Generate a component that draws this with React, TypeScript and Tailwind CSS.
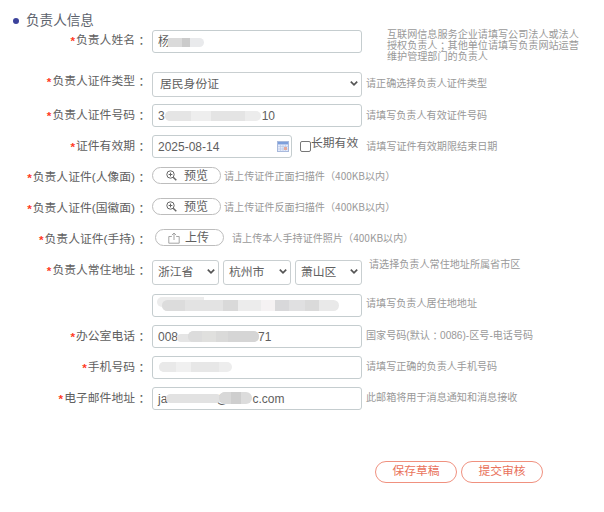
import React from 'react';

interface RowProps {
  label?: string;
  className: string;
  labelClass?: string;
  hint: React.ReactNode;
  hintClass: string;
  children: React.ReactNode;
}

const Row: React.FC<RowProps> = ({ label, className, labelClass = '', hint, hintClass, children }) => (
  <div className={`flex items-start ${className}`}>
    <div className={`w-[148px] shrink-0 flex justify-end text-[11.8px] leading-4 whitespace-nowrap ${labelClass}`}>
      {label && (
        <>
          <span className="text-[#ff3b1f] font-bold mr-px pt-px">*</span>
          <label>{label}</label>
          <span className="font-['Noto_Sans_CJK_TC',sans-serif] w-[13px] text-center">：</span>
        </>
      )}
    </div>
    <div className="ml-1 flex shrink-0">{children}</div>
    <div className={`text-[10.1px] leading-3 text-[#999] whitespace-nowrap ${hintClass}`}>{hint}</div>
  </div>
);

const Field: React.FC<{ children: React.ReactNode }> = ({ children }) => (
  <div className="relative w-[210px] h-[23px] border border-[#c5cdcf] rounded-[3px] bg-white px-[5px] flex items-center text-[12px] overflow-hidden">
    {children}
  </div>
);

interface SelectProps {
  value: string;
  className: string;
  padding: string;
}

const Select: React.FC<SelectProps> = ({ value, className, padding }) => (
  <div className={`relative h-[25px] ${className}`}>
    <select
      className={`appearance-none w-full h-full border border-[#c9cfd1] rounded-[3px] bg-white text-[11.8px] outline-none ${padding}`}
      defaultValue={value}
    >
      <option>{value}</option>
    </select>
    <svg className="absolute right-[4px] top-[9px]" width="8" height="7" viewBox="0 0 8 7" fill="none" stroke="#555" strokeWidth="1.7">
      <path d="M0.8 1.6 4 4.8 7.2 1.6" />
    </svg>
  </div>
);

const PreviewIcon = () => (
  <svg width="11" height="11" viewBox="0 0 11 11" fill="none" stroke="#666" strokeWidth="1">
    <circle cx="4.5" cy="4.5" r="3.7" />
    <path d="M2.6 4.5h3.8M4.5 2.6v3.8" />
    <path d="M7.2 7.2 10.3 10.3" strokeWidth="1.5" />
  </svg>
);

const UploadIcon = () => (
  <svg width="12" height="12" viewBox="0 0 12 12" fill="none" stroke="#9a9a9a" strokeWidth="0.9">
    <path d="M3.8 4.5H0.8v6.7h10.4V4.5H8.2M6 8V1M3.9 3.1 6 1l2.1 2.1" />
  </svg>
);

const PillButton: React.FC<{ icon: React.ReactNode; text: string; className: string }> = ({ icon, text, className }) => (
  <button className={`w-[69px] h-[17px] border border-[#bdbdbd] rounded-full flex items-center text-[12px] leading-none text-[#606060] ${className}`}>
    {icon}
    <span>{text}</span>
  </button>
);

const CalendarIcon = () => (
  <svg width="12" height="11" viewBox="0 0 12 11">
    <rect x="0.5" y="0.5" width="11" height="10" fill="#e3eafa" stroke="#a8b9dc" />
    <rect x="1" y="1" width="10" height="2.4" fill="#7d9fdb" />
    <path d="M1 5.5h10M1 8h10M3.5 3.5v7M6 3.5v7M8.5 3.5v7" stroke="#b6c5e4" strokeWidth="0.6" />
    <rect x="7" y="6" width="3" height="3" fill="#e6a99b" />
  </svg>
);

const Hint = ({ text }: { text: string }) => (
  <div className="flex font-['Noto_Sans_CJK_TC',sans-serif]">
    <span className="font-['Noto_Sans_CJK_SC',sans-serif]">{text}</span>
    <span>（</span>
    <span>400KB以内</span>
    <span>）</span>
  </div>
);

export default function App() {
  return (
    <div className="w-[604px] h-[512px] bg-white overflow-hidden text-[#606060] font-['Liberation_Sans','Noto_Sans_CJK_SC',sans-serif]">
      <h2 className="flex items-center h-[18px] mt-[12px] ml-[13px] text-[13.6px] text-[#5c626c]">
        <span className="size-[6px] rounded-full bg-[#3c429b] mr-[7px]" />
        负责人信息
      </h2>

      <Row
        label="负责人姓名"
        className="h-[23px]"
        labelClass="mt-[2px]"
        hintClass="ml-[25px] -mt-px !leading-[11px]"
        hint={
          <>
            <div>互联网信息服务企业请填写公司法人或法人</div>
            <div className="flex h-[11px]">
              授权负责人
              <span className="font-['Noto_Sans_CJK_TC',sans-serif]">；</span>
              其他单位请填写负责网站运营
            </div>
            <div>维护管理部门的负责人</div>
          </>
        }
      >
        <Field>
          <span>杨</span>
          <span className="absolute left-[15px] top-[7px] h-[9px] w-[36px] rounded-r-full bg-[#e9eaec] flex overflow-hidden">
            <i className="w-[14px] bg-[#dadada]" />
            <i className="w-[8px] bg-[#cbcbcb]" />
          </span>
        </Field>
      </Row>

      <Row label="负责人证件类型" className="h-[25px] mt-[18px]" labelClass="mt-[2px]" hint="请正确选择负责人证件类型" hintClass="ml-[4px] mt-[7px]">
        <Select value="居民身份证" className="w-[210px]" padding="pl-[7px]" />
      </Row>

      <Row label="负责人证件号码" className="h-[23px] mt-[8px]" labelClass="mt-[3px]" hint="请填写负责人有效证件号码" hintClass="ml-[4px] mt-[6px]">
        <Field>
          <span>3</span>
          <span className="absolute left-[12px] top-[6px] h-[10px] w-[96px] rounded-full bg-[#ececec] flex overflow-hidden">
            <i className="w-[26px] bg-[#e5e5e5]" />
            <i className="w-[20px] bg-[#eeeeee]" />
            <i className="w-[34px] bg-[#e4e4e4]" />
          </span>
          <span className="ml-[97px]">10</span>
        </Field>
      </Row>

      <Row label="证件有效期" className="h-[23px] mt-[8px]" labelClass="mt-[3px]" hint="请填写证件有效期限结束日期" hintClass="ml-[8px] mt-[6px]">
        <div className="w-[140px] h-[23px] border border-[#c5cdcf] rounded-[3px] flex items-center justify-between pl-[5px] pr-[2px]">
          <input className="w-[100px] text-[12px] outline-none" defaultValue="2025-08-14" />
          <CalendarIcon />
        </div>
        <label className="flex ml-[8px] text-[11.8px] leading-4 h-4">
          <input type="checkbox" className="appearance-none size-[11px] border border-[#777] rounded-[2px] mt-[6px]" />
          长期有效
        </label>
      </Row>

      <Row label="负责人证件(人像面)" className="h-[17px] mt-[9px]" labelClass="mt-[2px]" hint={<Hint text="请上传证件正面扫描件" />} hintClass="ml-[3px] mt-[3px]">
        <PillButton icon={<PreviewIcon />} text="预览" className="pl-[13px] gap-[7px]" />
      </Row>

      <Row label="负责人证件(国徽面)" className="h-[17px] mt-[14px]" labelClass="mt-[2px]" hint={<Hint text="请上传证件反面扫描件" />} hintClass="ml-[3px] mt-[3px]">
        <PillButton icon={<PreviewIcon />} text="预览" className="pl-[13px] gap-[7px]" />
      </Row>

      <Row label="负责人证件(手持)" className="h-[17px] mt-[14px]" labelClass="mt-[2px]" hint={<Hint text="请上传本人手持证件照片" />} hintClass="ml-[8px] mt-[3px]">
        <PillButton icon={<UploadIcon />} text="上传" className="ml-[3px] pl-[12px] gap-[5px]" />
      </Row>

      <Row label="负责人常住地址" className="h-[25px] mt-[14px]" labelClass="mt-[2px]" hint="请选择负责人常住地址所属省市区" hintClass="ml-[7px] -mt-px">
        <div className="flex gap-[4px] -mt-px">
          <Select value="浙江省" className="w-[67px]" padding="pl-[5px]" />
          <Select value="杭州市" className="w-[68px]" padding="pl-[5px]" />
          <Select value="萧山区" className="w-[67px]" padding="pl-[5px]" />
        </div>
      </Row>

      <Row className="h-[23px] mt-[9px]" hint="请填写负责人居住地地址" hintClass="ml-[4px] mt-[4px]">
        <Field>
          <span className="absolute left-[4px] top-[2px] h-[10px] w-[47px] rounded-l-full bg-[#ececec]" />
          <span className="absolute left-[9px] top-[5px] h-[11px] w-[177px] rounded-full bg-[#e9e9e9] flex overflow-hidden">
            <i className="w-[23px] bg-[#dcdcdc]" />
            <i className="w-[38px] bg-[#e3e3e3]" />
            <i className="w-[15px] bg-[#d9d9d9]" />
            <i className="w-[23px] bg-[#ececec]" />
            <i className="w-[14px] bg-[#f5f2f3]" />
            <i className="w-[14px] bg-[#d8d8da]" />
            <i className="w-[16px] bg-[#e0e0e1]" />
            <i className="w-[14px] bg-[#dadada]" />
          </span>
        </Field>
      </Row>

      <Row
        label="办公室电话"
        className="h-[23px] mt-[8px]"
        labelClass="mt-[3px]"
        hint={
          <div className="flex">
            国家号码(默认
            <span className="font-['Noto_Sans_CJK_TC',sans-serif]">：</span>
            0086)-区号-电话号码
          </div>
        }
        hintClass="ml-[4px] mt-[5px]"
      >
        <Field>
          <span>008</span>
          <span className="absolute left-[24px] top-[8px] h-[8px] w-[20px] rounded-full bg-[#e5e5e5]" />
          <span className="absolute left-[35px] top-[5px] h-[11px] w-[71px] rounded-full bg-[#dedede] flex overflow-hidden">
            <i className="w-[14px] bg-[#dcdcdc]" />
            <i className="w-[14px] bg-[#e0e0de]" />
            <i className="w-[12px] bg-[#dadad9]" />
            <i className="w-[31px] bg-[#d5d5d5]" />
          </span>
          <span className="ml-[80px]">71</span>
        </Field>
      </Row>

      <Row label="手机号码" className="h-[23px] mt-[8px]" labelClass="mt-[3px]" hint="请填写正确的负责人手机号码" hintClass="ml-[4px] mt-[5px]">
        <Field>
          <span className="absolute left-[6px] top-[5px] h-[10px] w-[73px] rounded-full bg-[#ededed] flex overflow-hidden">
            <i className="w-[17px] bg-[#e9e9e9]" />
            <i className="w-[15px] bg-[#f0f0f0]" />
            <i className="w-[28px] bg-[#e7e7e7]" />
          </span>
        </Field>
      </Row>

      <Row label="电子邮件地址" className="h-[23px] mt-[8px]" labelClass="mt-[3px]" hint="此邮箱将用于消息通知和消息接收" hintClass="ml-[4px] mt-[5px]">
        <Field>
          <span>ja</span>
          <span className="ml-[49px]">@</span>
          <span className="absolute left-[13px] top-[6px] h-[9px] w-[55px] rounded-full bg-[#e2e2e2]" />
          <span className="absolute left-[66px] top-[4px] h-[12px] w-[33px] rounded-full bg-[#dcdcdc] flex overflow-hidden">
            <i className="w-[12px] bg-[#d8d8d8]" />
            <i className="w-[10px] bg-[#cecece]" />
          </span>
          <span className="ml-[24px]">c.com</span>
        </Field>
      </Row>

      <div className="flex gap-[4px] mt-[51px] ml-[375px]">
        <button className="w-[82px] h-[22px] border border-[#f0917f] rounded-full text-[11.8px] leading-none text-[#e9735c]">保存草稿</button>
        <button className="w-[82px] h-[22px] border border-[#f0917f] rounded-full text-[11.8px] leading-none text-[#e9735c]">提交审核</button>
      </div>
    </div>
  );
}
